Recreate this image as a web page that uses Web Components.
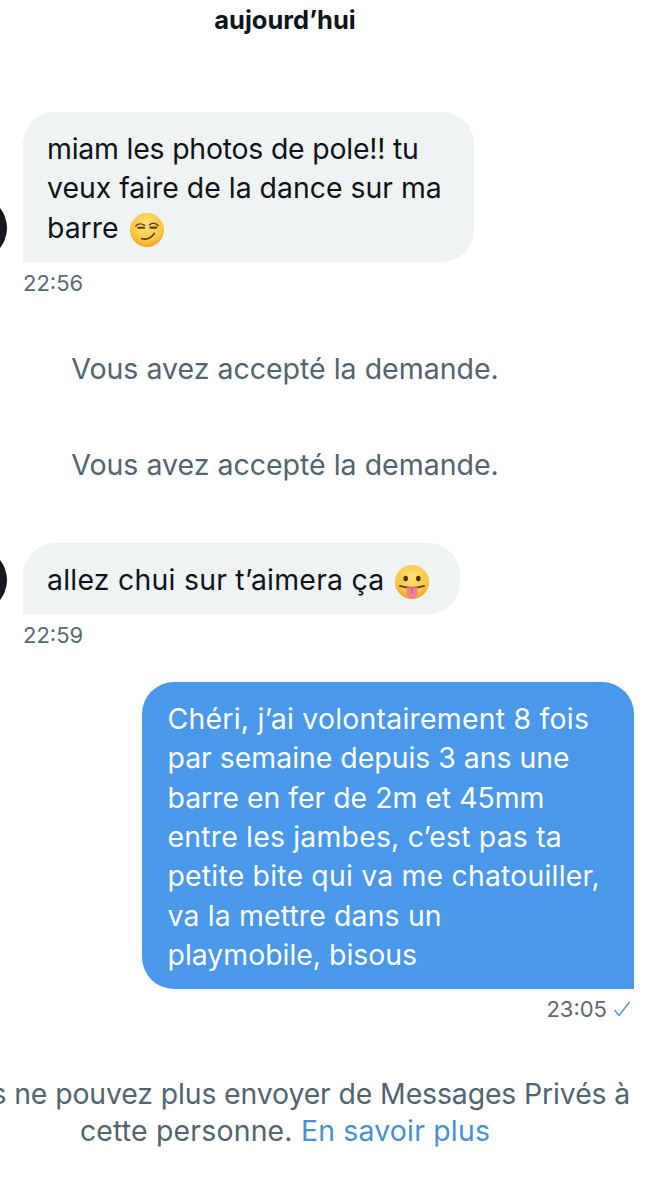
<!DOCTYPE html>
<html lang="fr"><head><meta charset="utf-8"><title>Messages</title>
<style>
html,body{margin:0;padding:0;background:#fff}
body{width:667px;height:1200px;overflow:hidden;font-family:Inter,"Liberation Sans",sans-serif;color:#0f1419}
</style></head><body>
<dm-thread>
  <dm-centered kind="day">aujourd’hui</dm-centered>
  <dm-message side="in" time="22:56" pad="32" style="margin-top:77px"><span style="letter-spacing:-.2px">miam les photos de pole!! tu</span><br>veux faire de la dance sur ma<br>barre <dm-emoji type="smirk"></dm-emoji></dm-message>
  <dm-centered style="margin-top:54px">Vous avez accepté la demande.</dm-centered>
  <dm-centered style="margin-top:60px">Vous avez accepté la demande.</dm-centered>
  <dm-message side="in" time="22:59" pad="30" style="margin-top:60px"><span style="letter-spacing:.25px">allez chui sur t’aimera ça</span> <dm-emoji type="tongue"></dm-emoji></dm-message>
  <dm-message side="out" time="23:05" pad="34" style="margin-top:33px"><span style="letter-spacing:.25px">Chéri, j’ai volontairement 8 fois</span><br>par semaine depuis 3 ans une<br>barre en fer de 2m et 45mm<br><span style="letter-spacing:.2px">entre les jambes, c’est pas ta</span><br><span style="letter-spacing:.2px">petite bite qui va me chatouiller,</span><br><span style="letter-spacing:.15px">va la mettre dans un</span><br>playmobile, bisous</dm-message>
  <dm-notice style="margin-top:52px"></dm-notice>
</dm-thread>
<script>
const def=(name,html)=>customElements.define(name,class extends HTMLElement{
  constructor(){super();this.attachShadow({mode:'open'})}
  connectedCallback(){this.shadowRoot.innerHTML=typeof html==='function'?html(this):html}
});
def('dm-thread',`<style>:host{display:flex;flex-direction:column;width:667px;height:1200px;overflow:hidden;padding-top:5px;box-sizing:border-box}</style><slot></slot>`);
def('dm-centered',`<style>
:host{display:block;width:570px;text-align:center;font-size:28.5px;line-height:36px;color:#536471;white-space:nowrap}
:host([kind=day]){font-size:25.5px;line-height:30px;font-weight:700;color:#0f1419}
</style><slot></slot>`);
def('dm-message',h=>{
 const out=h.getAttribute('side')==='out',t=h.getAttribute('time'),p=h.getAttribute('pad');
 return `<style>
:host{display:block}
.row{display:flex;align-items:flex-end;gap:16px;padding-right:33px;justify-content:${out?'flex-end':'flex-start'}}
.av{flex:none;width:64px;height:64px;border-radius:50%;background:#14171f;margin-left:-57px;margin-bottom:2px}
.b{padding:17px ${p}px 15px ${out?26:24}px;font-size:28.4px;line-height:39.3px;white-space:nowrap;
 border-radius:32px;${out?'border-bottom-right-radius:0;background:#4a98e9;color:#fff':'border-bottom-left-radius:0;background:#eff3f4;color:#0f1419'}}
.t{display:flex;align-items:center;gap:6px;margin-top:${out?6:7}px;font-size:22px;line-height:28px;color:#5b6874;${out?'justify-content:flex-end;padding-right:36px':'padding-left:23px'}}
svg{display:block;width:18px;height:16px}
</style>
<div class="row">${out?'':'<div class="av"></div>'}<div class="b"><slot></slot></div></div>
<div class="t"><span>${t}</span>${out?'<svg viewBox="0 0 18 16"><path d="M1.5 9 6 14.5 16.5 1" fill="none" stroke="#5b9bd5" stroke-width="1.5"/></svg>':''}</div>`;
});
def('dm-emoji',h=>{
 const smirk=`<path d="M7 14.5c2-2.8 6-3 9-.8M21 13.2c3-2.4 7-2 9 1" fill="none" stroke="#5b3a12" stroke-width="1.5" stroke-linecap="round"/><path d="M9.5 16.2h6M22 16h6" stroke="#5b3a12" stroke-width="2.2" stroke-linecap="round"/><path d="M13 27.5c5 1 10-.5 13-5.5" fill="none" stroke="#5b3a12" stroke-width="1.8" stroke-linecap="round"/>`;
 const tongue=`<ellipse cx="12" cy="15" rx="2.3" ry="2.8" fill="#4a2e10"/><ellipse cx="25" cy="15" rx="2.3" ry="2.8" fill="#4a2e10"/><path d="M6 22.5c8 2.6 17 2.6 25 0" fill="none" stroke="#5b3a12" stroke-width="1.8" stroke-linecap="round"/><path d="M13 24v6a5.5 5.5 0 0 0 11 0v-6z" fill="#ee7f9c"/><path d="M18.5 25v5.5" stroke="#c9567a" stroke-width="1"/>`;
 return `<style>:host{display:inline-block;width:36px;height:36px;vertical-align:-6px;margin:-4px 0 -4px 2px}svg{display:block;width:100%;height:100%}</style>
<svg viewBox="0 0 37 37"><defs><radialGradient id="g" cx=".5" cy=".35" r=".7"><stop offset="0" stop-color="#ffe27a"/><stop offset=".65" stop-color="#fcc644"/><stop offset="1" stop-color="#eb9a1e"/></radialGradient></defs><circle cx="18.5" cy="18.5" r="17.5" fill="url(#g)"/>${h.getAttribute('type')==='smirk'?smirk:tongue}</svg>`;
});
def('dm-notice',`<style>
:host{display:block;width:570px;font-size:28.4px;line-height:37px;color:#536471}
.l{display:flex;justify-content:center;white-space:nowrap}
.a{letter-spacing:-.12px}
.c{letter-spacing:.2px}
a{color:#4a90d0;text-decoration:none}
</style><div class="l a">Vous ne pouvez plus envoyer de Messages Privés à</div><div class="l c"><span>cette personne. <a>En savoir plus</a></span></div>`);
</script>
</body></html>
